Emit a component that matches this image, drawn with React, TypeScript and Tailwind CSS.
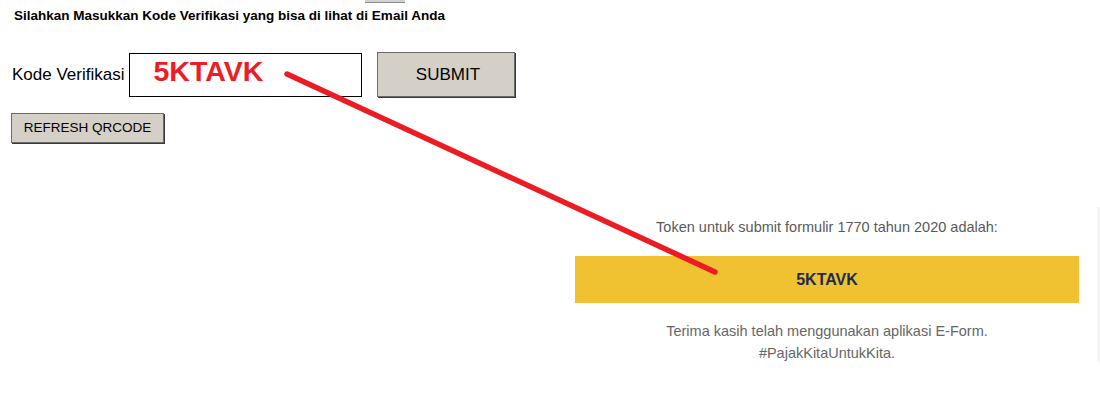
export default function App() {
  return (
    <div className="relative w-[1100px] h-[414px] overflow-hidden bg-white font-['Liberation_Sans',Arial,sans-serif]">
      {/* leftover button edge from the page above */}
      <div className="ml-[365px] w-[40px] h-[3px] bg-[#d0d0d0] border-b border-[#8a8a8a]" />

      {/* Header */}
      <p className="ml-[14px] mt-[5px] text-[13.5px] leading-[15px] font-bold text-black">
        Silahkan Masukkan Kode Verifikasi yang bisa di lihat di Email Anda
      </p>

      {/* Form row */}
      <div className="mt-[29px] ml-[12px] flex items-center">
        <span className="text-[17px] text-black">Kode Verifikasi</span>
        <div className="ml-[5px] w-[233px] h-[44px] border border-black pl-[23px] leading-[34px] text-[28.5px] font-bold text-[#ee1c25]">
          5KTAVK
        </div>
        <button className="ml-[15px] w-[138px] h-[45px] bg-[#d4d0c8] border border-[#6a6a6a] shadow-[1px_1px_0_#3a3a3a] pl-[3px] text-[17px] text-black">
          SUBMIT
        </button>
      </div>

      <button className="mt-[16px] ml-[11px] w-[153px] h-[30px] bg-[#d4d0c8] border border-[#6a6a6a] shadow-[1px_1px_0_#3a3a3a] text-[13.5px] text-black">
        REFRESH QRCODE
      </button>

      {/* Token panel */}
      <div className="mt-[74px] flex">
        <div className="ml-[575px] w-[504px] flex flex-col items-center">
          <p className="text-[14.5px] leading-[20px] text-[#595959]">
            Token untuk submit formulir 1770 tahun 2020 adalah:
          </p>
          <div className="mt-[19px] w-full h-[47px] bg-[#f0c231] flex items-center justify-center text-[16px] font-bold text-[#1f2b4e]">
            5KTAVK
          </div>
          <p className="mt-[17px] text-[14.5px] leading-[22px] text-[#666] text-center">
            Terima kasih telah menggunakan aplikasi E-Form.
            <br />
            #PajakKitaUntukKita.
          </p>
        </div>
        <div className="ml-[18px] mt-[-10px] w-[3px] h-[155px] bg-[#f5f5f5]" />
      </div>

      {/* Annotation arrow */}
      <svg className="absolute left-0 top-0 pointer-events-none" width="1100" height="414">
        <line x1="287" y1="74" x2="715" y2="272" stroke="#ec1c24" strokeWidth="5.5" strokeLinecap="round" />
      </svg>
    </div>
  );
}
